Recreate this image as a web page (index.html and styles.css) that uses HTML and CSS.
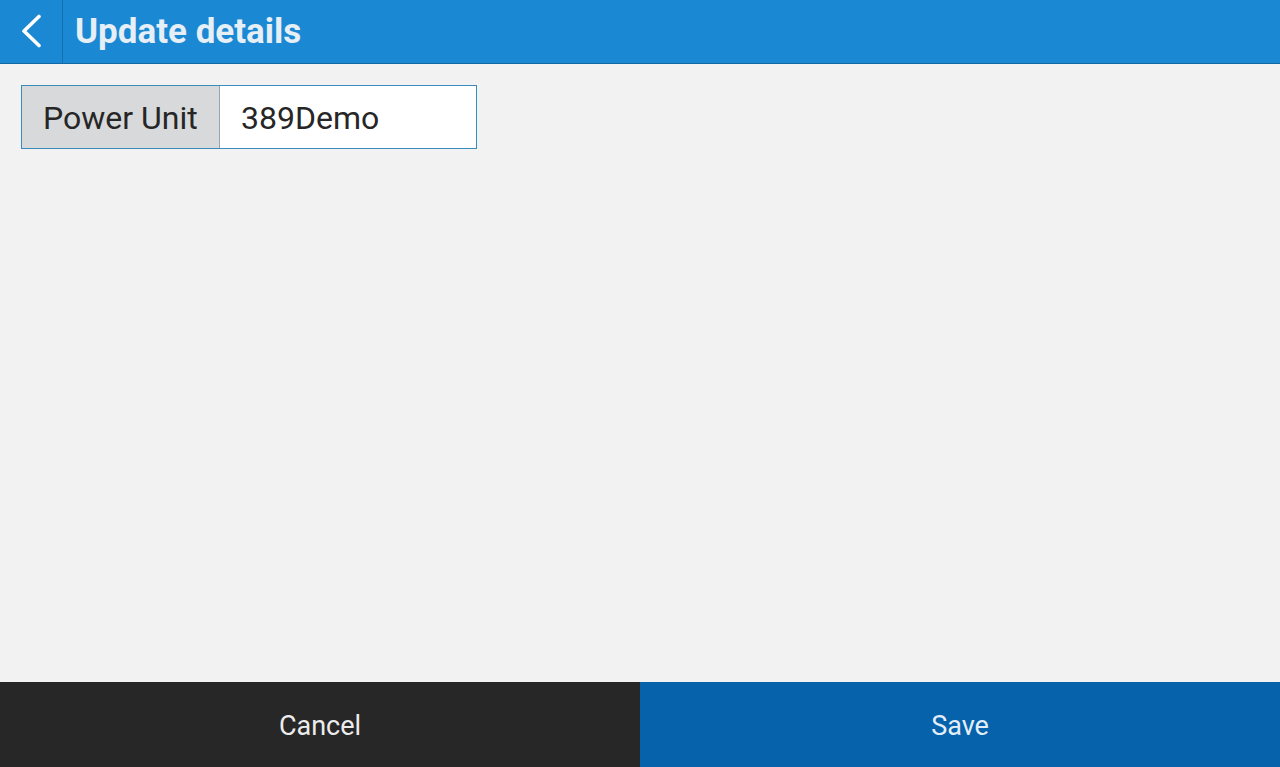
FILE: index.html
```html
<!DOCTYPE html>
<html>
<head>
<meta charset="utf-8">
<link rel="stylesheet" href="styles.css">
</head>
<body>
<div class="app">
  <header class="topbar">
    <button class="back" aria-label="Back">
      <svg width="20" height="34" viewBox="0 0 20 34"><path d="M18 2.5 L3 17 L18 31.5" fill="none" stroke="#ffffff" stroke-width="3.6" stroke-linecap="round" stroke-linejoin="round"/></svg>
    </button>
    <h1 class="title">Update details</h1>
  </header>
  <main class="content">
    <div class="field">
      <div class="field-label">Power Unit</div>
      <div class="field-value">389Demo</div>
    </div>
  </main>
  <footer class="actions">
    <button class="btn btn-cancel">Cancel</button>
    <button class="btn btn-save">Save</button>
  </footer>
</div>
</body>
</html>
```
FILE: styles.css
```css
* { box-sizing: border-box; }
html, body { margin: 0; padding: 0; height: 100%; }
body {
  font-family: Roboto, "Noto Sans", sans-serif;
  background: #f2f2f2;
}
.app {
  display: flex;
  flex-direction: column;
  height: 767px;
}
.topbar {
  display: flex;
  align-items: stretch;
  height: 64px;
  background: #1a88d3;
  border-bottom: 1px solid #1269a6;
}
.back {
  width: 63px;
  border: 0;
  border-right: 1px solid #136fae;
  background: transparent;
  display: flex;
  align-items: center;
  justify-content: flex-start;
  padding: 0 0 2px 21px;
}
.title {
  margin: 0;
  padding: 1px 0 0 12px;
  font-size: 35px;
  font-weight: 700;
  color: #e6eef6;
  line-height: 62px;
  letter-spacing: 0;
}
.content {
  flex: 1;
  padding: 21px 21px;
}
.field {
  display: flex;
  width: 456px;
  height: 64px;
  border: 1px solid #3a8cbd;
  background: #ffffff;
}
.field-label {
  width: 198px;
  background: #d8d9db;
  border-right: 1px solid #8fa6b6;
  color: #262626;
  font-size: 32px;
  display: flex;
  align-items: center;
  padding: 2px 0 0 21px;
}
.field-value {
  flex: 1;
  color: #262626;
  font-size: 32px;
  display: flex;
  align-items: center;
  padding: 2px 0 0 21px;
}
.actions {
  display: flex;
  height: 85px;
}
.btn {
  flex: 1;
  border: 0;
  font-family: Roboto, "Noto Sans", sans-serif;
  font-size: 27px;
  color: #ececec;
  padding: 2px 0 0 0;
}
.btn-cancel { background: #272727; }
.btn-save { background: #0562ab; color: #e4eef8; }
```
